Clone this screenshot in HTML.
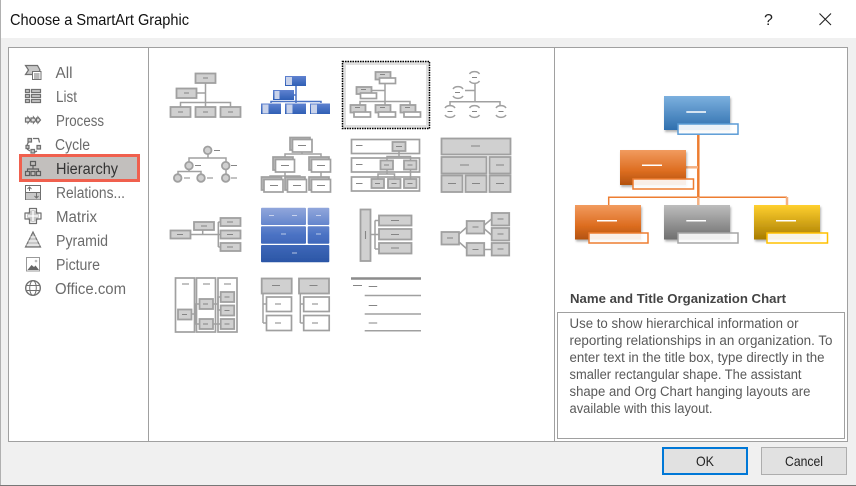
<!DOCTYPE html>
<html><head><meta charset="utf-8">
<style>
html,body{margin:0;padding:0;background:#f0f0f0;width:856px;height:486px;overflow:hidden}
svg{display:block}
text{font-family:"Liberation Sans",sans-serif}
.n{font-size:15.5px;fill:#6b6b6b}
.d{font-size:13.5px;fill:#595959}
.g{fill:#d0d0d0;stroke:#a0a0a0;stroke-width:1.8}
.w{fill:#fff;stroke:#a0a0a0;stroke-width:1.7}
.l{stroke:#a0a0a0;stroke-width:1.5;fill:none}
.k{stroke:#858585;stroke-width:1.1;fill:none}
.i{stroke:#707070;stroke-width:1.2;fill:none}
.if{stroke:#707070;stroke-width:1.2;fill:#c8c8c8}
</style></head><body>
<svg width="856" height="486" viewBox="0 0 856 486" xmlns="http://www.w3.org/2000/svg">
<defs>
<filter id="b" x="-2%" y="-2%" width="104%" height="104%"><feGaussianBlur stdDeviation="0.35"/></filter>
<filter id="s" x="-10%" y="-10%" width="125%" height="130%"><feDropShadow dx="1" dy="2" stdDeviation="1" flood-color="#000" flood-opacity=".3"/></filter>
<linearGradient id="bl" x1="0" y1="0" x2="0" y2="1"><stop offset="0" stop-color="#7cb0de"/><stop offset="1" stop-color="#2f6fae"/></linearGradient>
<linearGradient id="or" x1="0" y1="0" x2="0" y2="1"><stop offset="0" stop-color="#f19b5f"/><stop offset=".6" stop-color="#dd6d20"/><stop offset="1" stop-color="#b3520f"/></linearGradient>
<linearGradient id="gr" x1="0" y1="0" x2="0" y2="1"><stop offset="0" stop-color="#bdbdbd"/><stop offset="1" stop-color="#6f6f6f"/></linearGradient>
<linearGradient id="ye" x1="0" y1="0" x2="0" y2="1"><stop offset="0" stop-color="#ffd02f"/><stop offset="1" stop-color="#a87c00"/></linearGradient>
<linearGradient id="bb" x1="0" y1="0" x2="0" y2="1"><stop offset="0" stop-color="#5f82d0"/><stop offset="1" stop-color="#2f5fb5"/></linearGradient>
<linearGradient id="tb" gradientUnits="userSpaceOnUse" x1="0" y1="207" x2="0" y2="263"><stop offset="0" stop-color="#93a8dc"/><stop offset=".5" stop-color="#4a72c4"/><stop offset="1" stop-color="#2a55a5"/></linearGradient>
</defs>

<!-- window -->
<rect width="856" height="486" fill="#f0f0f0"/>
<rect width="856" height="38" fill="#fff"/>
<rect x="0" y="0" width="1" height="486" fill="#b0b0b0"/>
<rect x="0" y="485" width="856" height="1" fill="#777"/>
<text x="10" y="25" font-size="16" fill="#111" textLength="179" lengthAdjust="spacingAndGlyphs">Choose a SmartArt Graphic</text>
<text x="764" y="25" font-size="16" fill="#222">?</text>
<path d="M819.500 13.500L831 25M831 13.500L819.500 25" stroke="#222" stroke-width="1.100" fill="none"/>

<!-- main panel -->
<rect x="8.500" y="47.500" width="839" height="394" fill="#fff" stroke="#a0a0a0"/>
<path d="M148.500 47v394M554.500 47v394" stroke="#a0a0a0"/>

<!-- nav -->
<rect x="20.500" y="155.500" width="118" height="25" fill="#c2bfbd" stroke="#f0604e" stroke-width="3"/>
<text class="n" x="55.500" y="78" textLength="17" lengthAdjust="spacingAndGlyphs">All</text>
<text class="n" x="56" y="102" textLength="21" lengthAdjust="spacingAndGlyphs">List</text>
<text class="n" x="56" y="126" textLength="48" lengthAdjust="spacingAndGlyphs">Process</text>
<text class="n" x="55" y="150" textLength="35" lengthAdjust="spacingAndGlyphs">Cycle</text>
<text class="n" x="56" y="174" textLength="62" lengthAdjust="spacingAndGlyphs" style="fill:#333">Hierarchy</text>
<text class="n" x="56" y="198" textLength="69" lengthAdjust="spacingAndGlyphs">Relations...</text>
<text class="n" x="56" y="222" textLength="41" lengthAdjust="spacingAndGlyphs">Matrix</text>
<text class="n" x="56" y="246" textLength="52" lengthAdjust="spacingAndGlyphs">Pyramid</text>
<text class="n" x="56" y="270" textLength="44" lengthAdjust="spacingAndGlyphs">Picture</text>
<text class="n" x="55" y="294" textLength="71" lengthAdjust="spacingAndGlyphs">Office.com</text>

<!-- nav icons -->
<path class="if" d="M25.500 65.500h12l2.500 4.500-2.500 4.500h-12l3-4.500z"/>
<rect x="32.500" y="71.500" width="8.500" height="8" fill="#fff" stroke="#707070"/>
<path d="M34 74h5.500M34 76h5.500M34 78h5.500" stroke="#707070" stroke-width=".9"/>

<path class="if" d="M25.500 89.500h4v3h-4zM31.500 89.500h9v3h-9zM25.500 94.500h4v3h-4zM31.500 94.500h9v3h-9zM25.500 99.500h4v3h-4zM31.500 99.500h9v3h-9z"/>

<path class="if" style="fill:#e0e0e0" d="M25.500 118h2.500v-1l2.500 3-2.500 3v-1h-2.500zM31 118h2.500v-1l2.500 3-2.500 3v-1h-2.500zM36.500 118h1.500v-1l2.500 3-2.500 3v-1h-1.500z"/>

<path class="if" d="M28 138.500h3.500v3.500h-3.500zM26 145.500h3v3h-3zM31 149.500h3.500v3.500h-3.500zM37 145.500h3.500v3.500h-3.500z"/>
<path d="M33 138.500h5.500l1 4M37 151l-2 1M27 149l3 2M27 145l1.500-3" stroke="#707070" stroke-width="1.300" fill="none"/>

<path class="i" style="stroke:#5e5e5e" d="M30.500 161.500h5v4h-5zM25.500 171.500h4v4h-4zM31 171.500h4v4h-4zM36.500 171.500h4v4h-4zM33 165.500v3.500M27.500 171.500v-2.500h11v2.500"/>

<rect x="25.500" y="185.500" width="15" height="14" fill="#fff" stroke="#707070"/>
<rect x="26" y="192" width="14" height="7.500" fill="#c8c8c8"/>
<path d="M25.500 192.500h15M29.500 191v-4M27.500 189l2-2 2 2M36.500 193v5M34.500 196l2 2 2-2" stroke="#707070" fill="none"/>

<circle cx="33" cy="216" r="6" fill="#c8c8c8"/>
<path class="i" d="M29.500 208.500h7v4.500h4.500v6h-4.500v4.500h-7v-4.500h-4.500v-6h4.500z" fill="none" stroke-linejoin="round"/>
<path d="M33 211v10M28 216h10" stroke="#fff" stroke-width="1.300"/>

<path class="if" d="M33 232l7.500 15h-15z"/>
<path d="M30.500 237h5M28.500 241h9M26.500 245h13" stroke="#fff" stroke-width=".9"/>

<rect x="26.500" y="257.500" width="13" height="13.500" fill="#fff" stroke="#999"/>
<path d="M27.500 270l4-5 2.500 2 1.500-1.500 3.500 4.500z" fill="#666"/>
<circle cx="36" cy="261" r="1.300" fill="#bbb"/>

<circle cx="33" cy="288" r="7.300" fill="#fff" stroke="#707070" stroke-width="1.400"/>
<ellipse cx="33" cy="288" rx="3.300" ry="7.300" fill="none" stroke="#707070"/>
<path d="M26.500 285.500h13M26.500 290.500h13" stroke="#707070"/>

<!-- thumbnails -->
<g filter="url(#b)">
<!-- 1 -->
<path class="l" d="M205.500 83v24M197 93h8.500M180.500 107v-4.500h50v4.500"/>
<rect class="g" x="195.500" y="73.500" width="20" height="9.500"/><rect class="g" x="176.500" y="88.500" width="20" height="9.500"/>
<rect class="g" x="170.500" y="107" width="20" height="10"/><rect class="g" x="195.500" y="107" width="20" height="10"/><rect class="g" x="220.500" y="107" width="20" height="10"/>
<path class="k" d="M203 78h5M184 93h5M178 112h5M203 112h5M228 112h5"/>
<!-- 2 -->
<path d="M296 86v17M294 95h2M271 103v-1.500h50v1.500" stroke="#4a72c4" stroke-width="1.500" fill="none"/>
<g fill="url(#bb)"><rect x="285" y="76" width="21" height="10"/><rect x="273" y="90" width="21" height="10"/><rect x="261" y="103.500" width="20" height="10.500"/><rect x="285" y="103.500" width="21" height="10.500"/><rect x="310" y="103.500" width="20" height="10.500"/></g>
<g fill="#c8d2ea"><rect x="286" y="77" width="6" height="8"/><rect x="274.500" y="91" width="5" height="8"/><rect x="262.500" y="104.500" width="6" height="9"/><rect x="286.500" y="104.500" width="6" height="9"/><rect x="311" y="104.500" width="6" height="9"/></g>
<!-- 3 -->
<rect x="344" y="63" width="84" height="64" fill="#fff" stroke="#e0e0e0" stroke-width="4"/>
<rect x="342.500" y="61.500" width="87" height="67" fill="none" stroke="#000" stroke-width="1.500" stroke-dasharray="1.500 1"/>
<path class="l" d="M385 83v22M372 90.500h13M360 105v-3.500h50v3.500"/>
<rect class="g" x="375.500" y="72" width="15" height="7.500"/><rect class="g" x="356.500" y="87" width="15" height="7"/><rect class="g" x="350.500" y="105" width="15" height="7.500"/><rect class="g" x="375.500" y="105" width="15" height="7.500"/><rect class="g" x="400.500" y="105" width="15" height="7.500"/>
<rect class="w" x="379.500" y="78" width="16" height="5.500"/><rect class="w" x="360.500" y="93" width="16" height="5.500"/><rect class="w" x="354" y="112" width="16.500" height="5"/><rect class="w" x="378.500" y="112" width="17" height="5"/><rect class="w" x="404" y="112" width="16.500" height="5"/>
<path class="k" d="M380 74.500h5M361 89.500h5M355 107.500h5M380 107.500h5M405 107.500h5"/>
<!-- 4 -->
<path class="l" d="M475 83v19M465 90.500h10M450 106v-4.300h50v4.300"/>
<g class="l"><path d="M469.500 74a5.500 4 0 0 1 10 0M469.500 81a5.500 4 0 0 0 10 0M453 89a5.500 4 0 0 1 10 0M453 96a5.500 4 0 0 0 10 0M445 108a5.500 4 0 0 1 10 0M445 115a5.500 4 0 0 0 10 0M469.500 108a5.500 4 0 0 1 10 0M469.500 115a5.500 4 0 0 0 10 0M496 108a5.500 4 0 0 1 10 0M496 115a5.500 4 0 0 0 10 0"/></g>
<path class="k" d="M472 77.500h5M455 92.500h5M447.500 111.500h5M472 111.500h5M498.500 111.500h5"/>
<!-- 5 -->
<path class="l" d="M208 154v4M189 162v-4h37v4M189 170v1.500M178 174v-2.500h23v2.500M226 170v4"/>
<circle class="g" cx="207.700" cy="150.300" r="3.800"/><circle class="g" cx="189" cy="165.700" r="3.800"/><circle class="g" cx="225.700" cy="165.700" r="3.800"/><circle class="g" cx="177.700" cy="178" r="3.800"/><circle class="g" cx="201" cy="178" r="3.800"/><circle class="g" cx="225.700" cy="178" r="3.800"/>
<path class="k" d="M214 150.500h6M195 165.500h6M231 165.500h6M184 178h6M207 178h6M231 178h6"/>
<!-- 6 -->
<path class="l" d="M302 152v2M285 159v-5h36v5M285 172v4M270 179v-3h30v3M321 172v7"/>
<rect class="w" x="290" y="137.500" width="20" height="12.500" style="fill:#bbb"/><rect class="w" x="292.500" y="139.500" width="19.500" height="12.500"/><rect class="w" x="273" y="157" width="20" height="13" style="fill:#bbb"/><rect class="w" x="275.500" y="159.500" width="19" height="12.500"/><rect class="w" x="309" y="157" width="20" height="13" style="fill:#bbb"/><rect class="w" x="311.500" y="159.500" width="19" height="12.500"/><rect class="w" x="261.500" y="177" width="20" height="13" style="fill:#bbb"/><rect class="w" x="264" y="179.500" width="19" height="12.500"/><rect class="w" x="285" y="177" width="20" height="13" style="fill:#bbb"/><rect class="w" x="287.500" y="179.500" width="19" height="12.500"/><rect class="w" x="309" y="177" width="20" height="13" style="fill:#bbb"/><rect class="w" x="311.500" y="179.500" width="19" height="12.500"/>
<path class="k" d="M298 145.500h8M281 165.500h8M317 165.500h8M270 185.500h8M293 185.500h8M317 185.500h8"/>
<!-- 7 -->
<rect class="w" x="351.500" y="139.500" width="68" height="14"/><rect class="w" x="351.500" y="158" width="68" height="14"/><rect class="w" x="351.500" y="177" width="68" height="14"/>
<path class="l" d="M399 151v5.500M387 160v-3.500h23.500v3.500M387 170v4M378 179v-5h16.500v5M410.500 170v9"/>
<rect class="g" x="392.500" y="142" width="13" height="9"/><rect class="g" x="380.500" y="160.500" width="12.500" height="9"/><rect class="g" x="404" y="160.500" width="12.500" height="9"/><rect class="g" x="371.500" y="179" width="12.500" height="9"/><rect class="g" x="388" y="179" width="12.500" height="9"/><rect class="g" x="404" y="179" width="12.500" height="9"/>
<path class="k" d="M356 145.500h6.500M356 164.500h6.500M356 183.500h6.500M396 146.500h6M384 165h5M407.500 165h5M375 183.500h5M391.500 183.500h5M407.500 183.500h5"/>
<!-- 8 -->
<rect class="g" x="441.500" y="138.500" width="69" height="16"/><rect class="g" x="441.500" y="157" width="45" height="16.500"/><rect class="g" x="489.500" y="157" width="21" height="16.500"/><rect class="g" x="441.500" y="175.500" width="21" height="16.500"/><rect class="g" x="465.500" y="175.500" width="21" height="16.500"/><rect class="g" x="489.500" y="175.500" width="21" height="16.500"/>
<path class="k" d="M471 146h9M460 165h9M496 165h8M448 183.500h8M472 183.500h8M496 183.500h8"/>
<!-- 9 -->
<path class="l" d="M190 234.500h30M202.700 229.700v4.800M218.300 222v25M218.300 222h2M218.300 247h2"/>
<rect class="g" x="170.500" y="230.500" width="20" height="8"/><rect class="g" x="194" y="222" width="20" height="8"/><rect class="g" x="220.500" y="218" width="20" height="8"/><rect class="g" x="220.500" y="230.500" width="20" height="8"/><rect class="g" x="220.500" y="243" width="20" height="8"/>
<path class="k" d="M177 234.500h6M201 226h6M227 222h6M227 234.500h6M227 247h6"/>
<!-- 10 -->
<g fill="url(#tb)"><rect x="261" y="207.700" width="45" height="17.300" rx="1"/><rect x="307.700" y="207.700" width="21.600" height="17.300" rx="1"/><rect x="261" y="226.300" width="45" height="17.400" rx="1"/><rect x="307.700" y="226.300" width="21.600" height="17.400" rx="1"/><rect x="261" y="245" width="68.300" height="17.300" rx="1"/></g>
<path stroke="#dfe6f5" stroke-width=".8" d="M269 215.500h5M292 215.500h5M316 215.500h5M281 234h5M316 234h5M292 253h5"/>
<!-- 11 -->
<rect class="w" x="175.500" y="278" width="19" height="54"/><rect class="w" x="196.500" y="278" width="19" height="54"/><rect class="w" x="218" y="278" width="19" height="54"/>
<path class="l" d="M191.500 314h4v-10h4M195.500 314v10h4M212.500 304h5.500v-7h3M218 304v6h3M212.500 324h8"/>
<rect class="g" x="178" y="309.500" width="13.500" height="10"/><rect class="g" x="199.500" y="299" width="13.500" height="10"/><rect class="g" x="199.500" y="319" width="13.500" height="10"/><rect class="g" x="220.700" y="292" width="13.500" height="10"/><rect class="g" x="220.700" y="305.500" width="13.500" height="10"/><rect class="g" x="220.700" y="319" width="13.500" height="10"/>
<path class="k" d="M182 284h7M203 284h7M224 284h7M182 314.500h5M203 304h5M203 324h5M224.500 297h5M224.500 310.500h5M224.500 324h5"/>
<!-- 12 -->
<path class="l" d="M263 293v30M263 304h3.500M263 323h3.500M300.300 293v30M300.300 304h3.500M300.300 323h3.500"/>
<rect class="g" x="261.700" y="278.500" width="30" height="15"/><rect class="g" x="299" y="278.500" width="30" height="15"/><rect class="w" x="266.500" y="297" width="25" height="14.500"/><rect class="w" x="266.500" y="315.500" width="25" height="15"/><rect class="w" x="303.700" y="297" width="25.500" height="14.500"/><rect class="w" x="303.700" y="315.500" width="25.500" height="15"/>
<path class="k" d="M272 285.500h8M309.500 285.500h8M275 304h6M275 323h6M312 304h6M312 323h6"/>
<!-- 13 -->
<path class="l" d="M370.500 234.500h9M375 220.500v28.500M375 220.500h4M375 249h4"/>
<rect class="g" x="360.500" y="209.500" width="10" height="51.500"/><rect class="g" x="379" y="215.500" width="32.500" height="10"/><rect class="g" x="379" y="229" width="32.500" height="10.500"/><rect class="g" x="379" y="243" width="32.500" height="10.500"/>
<path class="k" d="M365.500 231v8M391 220.500h8M391 234.500h8M391 248h8"/>
<!-- 14 -->
<path class="l" d="M459 234l8-7M459 242l8 7M484.500 225l7-6M484.500 229l7 6M484.500 249.500h7"/>
<rect class="g" x="441.500" y="232" width="17.500" height="12.500"/><rect class="g" x="466.700" y="221" width="17.500" height="12.500"/><rect class="g" x="466.700" y="243" width="17.500" height="12.500"/><rect class="g" x="491.700" y="213" width="17.500" height="12.500"/><rect class="g" x="491.700" y="228" width="17.500" height="12.500"/><rect class="g" x="491.700" y="243" width="17.500" height="12.500"/>
<path class="k" d="M447 238h6M472.500 227h6M472.500 249.500h6M497.500 219h6M497.500 234h6M497.500 249h6"/>
<!-- 15 -->
<path d="M351 278.500h70" stroke="#8c8c8c" stroke-width="2.500"/>
<path class="l" d="M364.700 295.500h56.300M364.700 314h56.300M364.700 330.700h56.300"/>
<path class="k" d="M353 285.500h9M368.700 286.500h8.500M368.700 305.500h8.500M368.700 323h8.500"/>
</g>

<!-- preview -->
<path d="M608.700 205v-7.700h178.300" stroke="#ed7d31" stroke-width="1.500" fill="none"/>
<path d="M698.300 135v62" stroke="#ed7d31" stroke-width="2.500"/>
<path d="M686 167.300h12" stroke="#f4b183" stroke-width="2.500"/>
<path d="M698.300 197v8M787 197v8" stroke="#f4b183" stroke-width="2.500"/>
<rect x="664" y="96" width="66" height="34" fill="url(#bl)" filter="url(#s)"/>
<rect x="620" y="150" width="66" height="35" fill="url(#or)" filter="url(#s)"/>
<rect x="575" y="205" width="66" height="34.500" fill="url(#or)" filter="url(#s)"/>
<rect x="664" y="205" width="66" height="34.500" fill="url(#gr)" filter="url(#s)"/>
<rect x="754" y="205" width="66" height="34.500" fill="url(#ye)" filter="url(#s)"/>
<g fill="#fff" fill-opacity=".9" stroke-width="1.500">
<rect x="678" y="124" width="60" height="10.200" stroke="#5b9bd5"/>
<rect x="633" y="179" width="60.500" height="10" stroke="#ed7d31"/>
<rect x="589" y="233" width="59" height="10" stroke="#ed7d31"/>
<rect x="678" y="233" width="60" height="10" stroke="#a5a5a5"/>
<rect x="767" y="233" width="60.500" height="10" stroke="#ffc000"/>
</g>
<path d="M686.300 112h19.700M642 165.300h20M597 220.700h20M686.300 220.700h19.700M776 220.700h20" stroke="#fff" stroke-width="1.500"/>

<!-- description -->
<text x="570" y="303" font-size="13" font-weight="bold" fill="#444" textLength="216" lengthAdjust="spacingAndGlyphs">Name and Title Organization Chart</text>
<rect x="557.500" y="312.500" width="287" height="126" fill="#fff" stroke="#a0a0a0"/>
<text class="d" x="569.500" y="328" textLength="229" lengthAdjust="spacingAndGlyphs">Use to show hierarchical information or</text>
<text class="d" x="569.500" y="345" textLength="263" lengthAdjust="spacingAndGlyphs">reporting relationships in an organization. To</text>
<text class="d" x="569.500" y="362" textLength="255" lengthAdjust="spacingAndGlyphs">enter text in the title box, type directly in the</text>
<text class="d" x="569.500" y="379" textLength="232" lengthAdjust="spacingAndGlyphs">smaller rectangular shape. The assistant</text>
<text class="d" x="569.500" y="396" textLength="241" lengthAdjust="spacingAndGlyphs">shape and Org Chart hanging layouts are</text>
<text class="d" x="569.500" y="413" textLength="143" lengthAdjust="spacingAndGlyphs">available with this layout.</text>

<!-- buttons -->
<rect x="663" y="448" width="84" height="26" fill="#e1e1e1" stroke="#0078d7" stroke-width="2"/>
<text x="705" y="466" font-size="14" fill="#222" text-anchor="middle" textLength="18" lengthAdjust="spacingAndGlyphs">OK</text>
<rect x="761.500" y="447.500" width="85" height="27" fill="#e1e1e1" stroke="#adadad"/>
<text x="804" y="466" font-size="14" fill="#222" text-anchor="middle" textLength="38" lengthAdjust="spacingAndGlyphs">Cancel</text>
</svg>
</body></html>
